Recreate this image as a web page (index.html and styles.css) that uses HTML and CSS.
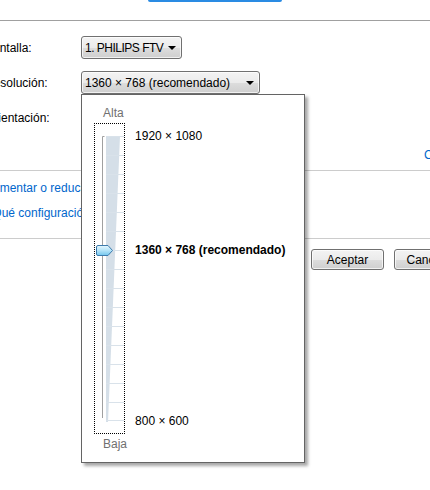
FILE: index.html
```html
<!DOCTYPE html>
<html lang="es">
<head>
  <meta charset="UTF-8" />
  <meta name="viewport" content="width=device-width, initial-scale=1.0"/>
  <title>Resolución de pantalla</title>
  <link rel="stylesheet" href="styles.css">
</head>
<body>
  <div class="panel">
    <div class="monitor-edge"></div>
    <hr class="rule rule-dark" />

    <div class="settings">
      <label>Pantalla:</label>
      <div class="combo combo-short"><span>1. PHILIPS FTV</span><i class="arrow"></i></div>
      <label>Resolución:</label>
      <div class="combo combo-long"><span>1360 × 768 (recomendado)</span><i class="arrow"></i></div>
      <label>Orientación:</label>
      <div class="combo combo-short"><span>Horizontal</span><i class="arrow"></i></div>
    </div>

    <a class="link advanced" href="#">Configuración avanzada</a>
    <hr class="rule" />
    <a class="link first" href="#">Aumentar o reducir el texto y otros elementos</a>
    <a class="link second" href="#">¿Qué configuración de pantalla debo elegir?</a>
    <hr class="rule rule-low" />

    <div class="buttons">
      <button>Aceptar</button>
      <button>Cancelar</button>
      <button>Aplicar</button>
    </div>
  </div>

  <!-- open resolution list -->
  <div class="res-popup">
    <div class="slider-col">
      <span class="end-label">Alta</span>
      <div class="slider-box">
        <svg width="29" height="309" viewBox="0 0 29 309">
          <defs>
            <linearGradient id="thumb" x1="0" y1="0" x2="0" y2="1">
              <stop offset="0" stop-color="#e6f7fe"/>
              <stop offset="0.5" stop-color="#b3e3f8"/>
              <stop offset="1" stop-color="#72c6ee"/>
            </linearGradient>
          </defs>
          <polygon points="11,12 25,12 13,298 11,298" fill="#d5dfe8"/>
          <g stroke="#d9e2ea" stroke-width="1">
            <line x1="11" y1="12.5" x2="29" y2="12.5"/>
            <line x1="11" y1="31.5" x2="29" y2="31.5"/>
            <line x1="11" y1="50.5" x2="29" y2="50.5"/>
            <line x1="11" y1="69.5" x2="29" y2="69.5"/>
            <line x1="11" y1="88.5" x2="29" y2="88.5"/>
            <line x1="11" y1="107.5" x2="29" y2="107.5"/>
            <line x1="11" y1="126.5" x2="29" y2="126.5"/>
            <line x1="11" y1="145.5" x2="29" y2="145.5"/>
            <line x1="11" y1="164.5" x2="29" y2="164.5"/>
            <line x1="11" y1="183.5" x2="29" y2="183.5"/>
            <line x1="11" y1="202.5" x2="29" y2="202.5"/>
            <line x1="11" y1="221.5" x2="29" y2="221.5"/>
            <line x1="11" y1="240.5" x2="29" y2="240.5"/>
            <line x1="11" y1="259.5" x2="29" y2="259.5"/>
            <line x1="11" y1="278.5" x2="29" y2="278.5"/>
            <line x1="11" y1="296.5" x2="29" y2="296.5"/>
          </g>
          <path d="M9.5,12.5 H7.5 V294" fill="none" stroke="#a0a0a0" stroke-width="1"/>
          <path d="M1.5,123 Q1.5,121.5 3,121.5 H13 L17.5,126.5 L13,131.5 H3 Q1.5,131.5 1.5,130 Z" fill="url(#thumb)" stroke="#3d7bad" stroke-width="1"/>
        </svg>
      </div>
      <span class="end-label">Baja</span>
    </div>
    <div class="res-labels">
      <span class="res res-top">1920 × 1080</span>
      <span class="res res-current">1360 × 768 (recomendado)</span>
      <span class="res res-bottom">800 × 600</span>
    </div>
  </div>
</body>
</html>
```

FILE: styles.css
```css
body {
  font-family: 'Liberation Sans', Arial, sans-serif;
  font-size: 12px;
  color: #000;
  background: #fff;
  margin: 0;
  width: 430px;
  height: 490px;
  overflow: hidden;
  position: relative;
}

.panel {
  margin-left: -15px;
  width: 700px;
}

.monitor-edge {
  margin-left: 163px;
  width: 134px;
  height: 2px;
  background: #2a8be3;
  border-radius: 0 0 2px 2px;
}

.rule {
  border: 0;
  height: 1px;
  margin: 0;
  background: #cccccc;
}

.rule-dark {
  margin-top: 18px;
  background: #a0a0a0;
}

.settings {
  display: grid;
  grid-template-columns: 96px auto;
  row-gap: 12px;
  align-items: center;
  margin-top: 15px;
}

.settings label {
  line-height: 14px;
  white-space: nowrap;
}

.combo {
  height: 23px;
  box-sizing: border-box;
  border: 1px solid #707070;
  border-radius: 3px;
  background: linear-gradient(#f3f3f3 0%, #ebebeb 50%, #dddddd 51%, #cfcfcf 100%);
  box-shadow: inset 0 0 0 1px rgba(255, 255, 255, 0.7);
  display: flex;
  align-items: center;
  justify-content: space-between;
  padding: 0 5px 0 3px;
  white-space: nowrap;
}

.combo-short {
  width: 101px;
}

.combo-short span {
  letter-spacing: -0.5px;
}

.combo-long {
  width: 179px;
}

.arrow {
  flex: none;
  width: 0;
  height: 0;
  border-left: 4px solid transparent;
  border-right: 4px solid transparent;
  border-top: 4px solid #000;
  margin-top: 1px;
}

.link {
  display: block;
  color: #0066cc;
  text-decoration: none;
  line-height: 14px;
  white-space: nowrap;
}

.advanced {
  margin: 19px 0 8px 439px;
}

.first {
  margin-top: 10px;
}

.second {
  margin-top: 11px;
}

.rule-low {
  margin-top: 18px;
}

.buttons {
  display: flex;
  gap: 10px;
  margin: 10px 0 0 326px;
}

.buttons button {
  flex: none;
  width: 73px;
  height: 21px;
  font-family: inherit;
  font-size: 12px;
  color: #000;
  border: 1px solid #707070;
  border-radius: 3px;
  background: linear-gradient(#f3f3f3 0%, #ebebeb 50%, #dddddd 51%, #cfcfcf 100%);
  box-shadow: inset 0 0 0 1px rgba(255, 255, 255, 0.7);
  padding: 0;
}

.res-popup {
  position: absolute;
  left: 81px;
  top: 94px;
  width: 224px;
  height: 369px;
  box-sizing: border-box;
  background: #fff;
  border: 1px solid #646464;
  box-shadow: 3px 3px 3px rgba(0, 0, 0, 0.35);
  display: flex;
  padding: 11px 0 0 12px;
}

.slider-col {
  display: flex;
  flex-direction: column;
}

.end-label {
  line-height: 14px;
  color: #707070;
  padding-left: 9px;
}

.slider-box {
  width: 31px;
  height: 311px;
  box-sizing: border-box;
  border: 1px dotted #000;
  margin: 3px 0;
}

.slider-box svg {
  display: block;
}

.res-labels {
  display: grid;
  grid-template-rows: repeat(16, 19px);
  align-items: center;
  margin: 20px 0 0 8px;
}

.res {
  line-height: 14px;
  white-space: nowrap;
}

.res-top {
  grid-row: 1;
}

.res-current {
  grid-row: 7;
  font-weight: bold;
}

.res-bottom {
  grid-row: 16;
}
```
